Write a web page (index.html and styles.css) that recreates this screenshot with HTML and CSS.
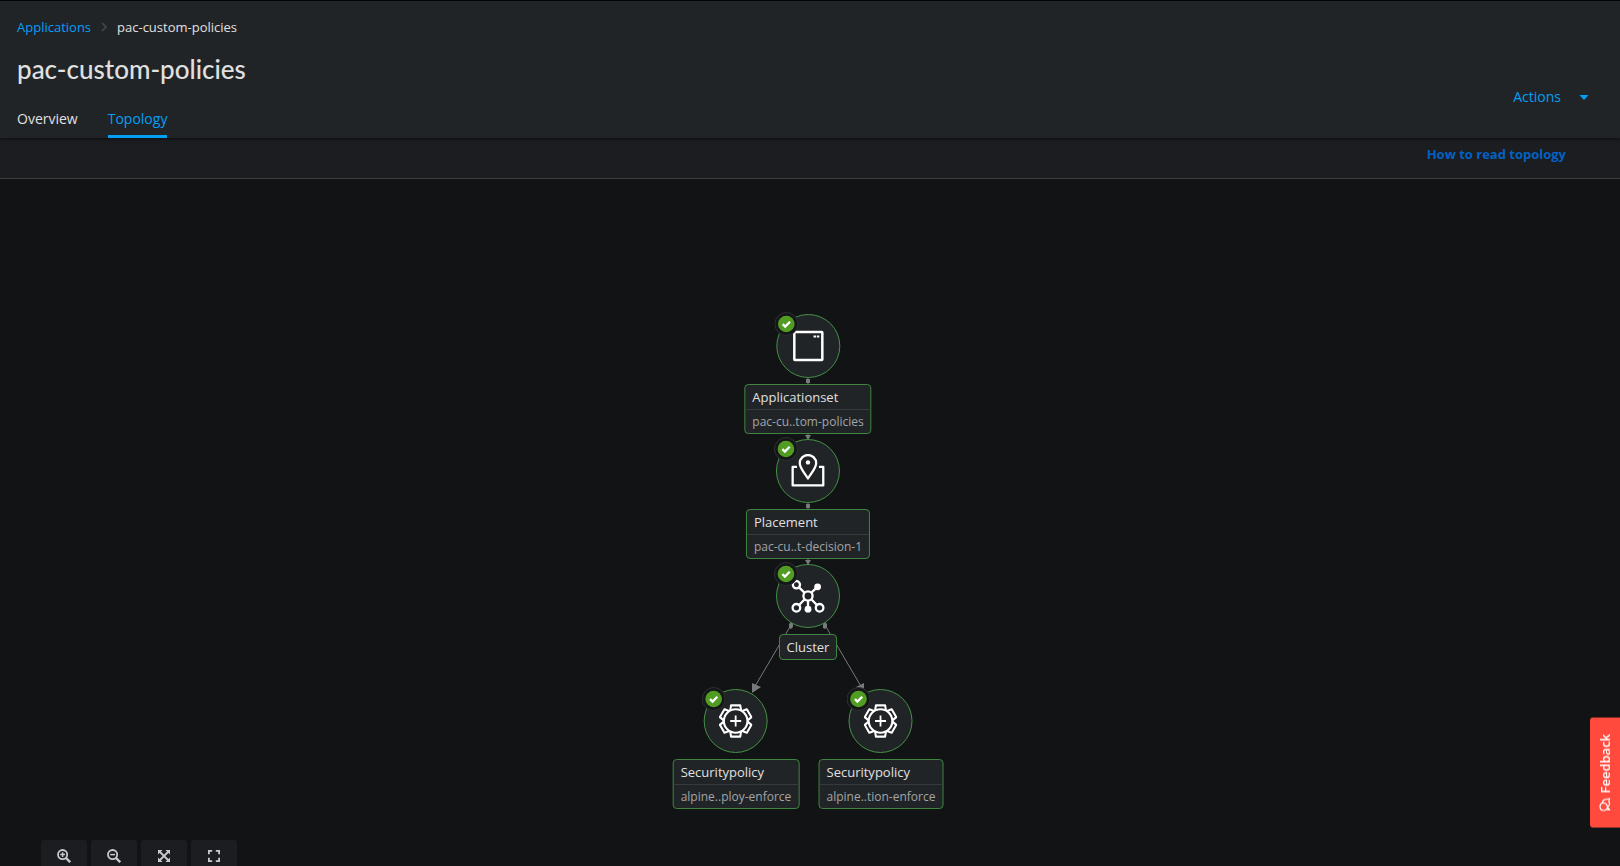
FILE: index.html
```html
<!DOCTYPE html>
<html lang="en">
<head>
<meta charset="utf-8">
<meta name="viewport" content="width=device-width, initial-scale=1">
<title>pac-custom-policies</title>
<link rel="stylesheet" href="styles.css">
</head>
<body>
<svg class="defs" aria-hidden="true">
  <symbol id="badge" viewBox="-12 -12 24 24">
    <circle r="11.5" fill="#151618" stroke="#2e3034"/>
    <circle r="8.3" fill="#519d23"/>
    <path d="M-3.6 .1-1.1 2.6 3.7-2.3" fill="none" stroke="#fff" stroke-width="2.3"/>
  </symbol>
  <symbol id="gear" viewBox="-17 -17 34 34">
    <g fill="none" stroke="#fff" stroke-width="2.1" stroke-linejoin="round">
      <circle r="11.8"/>
      <path id="tooth" d="M-5.4-10.6-4.6-15.6H4.6L5.4-10.6"/>
      <use href="#tooth" transform="rotate(60)"/>
      <use href="#tooth" transform="rotate(120)"/>
      <use href="#tooth" transform="rotate(180)"/>
      <use href="#tooth" transform="rotate(240)"/>
      <use href="#tooth" transform="rotate(300)"/>
      <path d="M0-5.5V5.5M-5.5 0H5.5" stroke-width="1.8"/>
    </g>
  </symbol>
</svg>

<header class="page-header">
  <div class="heading">
    <nav class="breadcrumb" aria-label="Breadcrumb">
      <a href="#">Applications</a>
      <svg width="6" height="10" viewBox="0 0 6 10" aria-hidden="true"><path d="M1 1l4 4-4 4" fill="none" stroke="#44474a" stroke-width="1.6"/></svg>
      <span>pac-custom-policies</span>
    </nav>
    <h1>pac-custom-policies</h1>
    <nav class="tabs" aria-label="Sections">
      <a href="#">Overview</a>
      <a href="#" class="active" aria-current="page">Topology</a>
    </nav>
  </div>
  <button class="actions" type="button">Actions
    <svg width="10" height="5" viewBox="0 0 10 5" aria-hidden="true"><path d="M.4 0H9.6L5 5z" fill="currentColor"/></svg>
  </button>
</header>

<div class="help-bar"><a href="#">How to read topology</a></div>

<main class="canvas">
  <div class="stage">
    <svg class="edges" viewBox="0 0 288 512" aria-hidden="true">
      <g stroke="#77797b" fill="none">
        <path d="M144 74V86M144 130V136M144 199V211M144 255V261"/>
        <path d="M127 321 90 384M161 321 198 384"/>
      </g>
      <g fill="#77797b">
        <path d="M142 75h4v4h-4zM142 200h4v4h-4zM141 131h6l-3 5zM141 256h6l-3 5z"/>
        <path d="M125 320l2-2 2 2v3l-2 2-2-1zM159 320l2-2 2 2v3l-2 2-2-1z"/>
        <path d="M88 379l9 4-9 6zM200 379l-8 4 8 6z"/>
      </g>
    </svg>

    <div class="node app">
      <div class="disc">
        <svg class="badge" aria-label="Healthy"><use href="#badge"/></svg>
        <svg width="34" height="34" viewBox="-17 -17 34 34" aria-hidden="true">
          <rect x="-14" y="-14" width="28" height="28" rx=".5" fill="none" stroke="#fff" stroke-width="2.5"/>
          <path d="M5.2-9.6H7.7M8.5-9.6H11" stroke="#fff" stroke-width="2"/>
        </svg>
      </div>
      <div class="label"><span class="kind">Applicationset</span><span class="name">pac-cu..tom-policies</span></div>
    </div>

    <div class="node placement">
      <div class="disc">
        <svg class="badge" aria-label="Healthy"><use href="#badge"/></svg>
        <svg width="34" height="34" viewBox="-17 -17 34 34" aria-hidden="true">
          <g fill="none" stroke="#fff" stroke-width="2.3" stroke-linejoin="round">
            <path d="M0 7.5C-3 2.2-8.2-2.8-8.2-7.8A8.2 8.2 0 0 1 8.2-7.8C8.2-2.8 3 2.2 0 7.5z"/>
            <path d="M-11-4.2H-15.3V14.4H15.3V-4.2H11"/>
          </g>
          <circle cy="-8.6" r="2.2" fill="#fff"/>
        </svg>
      </div>
      <div class="label"><span class="kind">Placement</span><span class="name">pac-cu..t-decision-1</span></div>
    </div>

    <div class="node cluster">
      <div class="disc">
        <svg class="badge" aria-label="Healthy"><use href="#badge"/></svg>
        <svg width="34" height="34" viewBox="-17 -17 34 34" aria-hidden="true">
          <g fill="none" stroke="#fff" stroke-width="2.3">
            <circle r="4.6"/><circle cx="-11.6" cy="-11.2" r="3.6"/>
            <circle cx="-11.6" cy="11.8" r="3.8"/><circle cx="11.6" cy="11.8" r="3.8"/>
            <path d="M-9-8.6-3.3-3.2M3.3-3.3 9-8.6M-3.3 3.3-8.9 9M3.3 3.3 8.9 9M0 4.6V12"/>
          </g>
          <g fill="#fff"><circle cx="9.6" cy="-9.2" r="3.4"/><circle cy="13.2" r="3.4"/></g>
        </svg>
      </div>
      <div class="label"><span class="kind">Cluster</span></div>
    </div>

    <div class="node policy-left">
      <div class="disc">
        <svg class="badge" aria-label="Healthy"><use href="#badge"/></svg>
        <svg width="34" height="34" aria-hidden="true"><use href="#gear"/></svg>
      </div>
      <div class="label"><span class="kind">Securitypolicy</span><span class="name">alpine..ploy-enforce</span></div>
    </div>

    <div class="node policy-right">
      <div class="disc">
        <svg class="badge" aria-label="Healthy"><use href="#badge"/></svg>
        <svg width="34" height="34" aria-hidden="true"><use href="#gear"/></svg>
      </div>
      <div class="label"><span class="kind">Securitypolicy</span><span class="name">alpine..tion-enforce</span></div>
    </div>
  </div>

  <div class="controls">
    <button type="button" aria-label="Zoom in"><svg viewBox="0 0 14 14"><g fill="none" stroke="currentColor"><circle cx="5.6" cy="5.6" r="4.6" stroke-width="1.8"/><path d="M9 9l4.2 4.2" stroke-width="2.4"/><path d="M5.6 3.2v4.8M3.2 5.6H8" stroke-width="1.5"/></g></svg></button>
    <button type="button" aria-label="Zoom out"><svg viewBox="0 0 14 14"><g fill="none" stroke="currentColor"><circle cx="5.6" cy="5.6" r="4.6" stroke-width="1.8"/><path d="M9 9l4.2 4.2" stroke-width="2.4"/><path d="M3.2 5.6H8" stroke-width="1.5"/></g></svg></button>
    <button type="button" aria-label="Fit to screen"><svg viewBox="0 0 14 14"><path d="M1 1h4.6L1 5.6zM13 1v4.6L8.4 1zM1 13V8.4L5.6 13zM13 13H8.4L13 8.4z" fill="currentColor"/><path d="M2.5 2.5l9 9M11.5 2.5l-9 9" stroke="currentColor" stroke-width="1.8"/></svg></button>
    <button type="button" aria-label="Reset view"><svg viewBox="0 0 14 14"><path d="M1.9 5.2V1.9H5.2M8.8 1.9h3.3v3.3M12.1 8.8v3.3H8.8M5.2 12.1H1.9V8.8" fill="none" stroke="currentColor" stroke-width="1.8"/></svg></button>
  </div>
</main>

<button class="feedback" type="button">
  <svg width="12" height="14" viewBox="0 0 12 14" aria-hidden="true"><g fill="none" stroke="#fff" stroke-width="1.2" stroke-linejoin="round"><path d="M8.4 9.4C8 11.6 6.4 13 4.6 13 2.6 13 1 11.4 1 9.2 1 7 2.6 5.4 4.6 5.4 6.6 5.4 8.4 7.2 8.4 9.4L10.6 12.4 7.4 12"/><path d="M3.4 5.4C3.6 3.2 5 1.8 7 2L10.6 1 9.8 3.8C11.2 5.8 10.6 8.4 8.4 9.2"/></g></svg>
  Feedback
</button>
</body>
</html>
```

FILE: styles.css
```css
* { box-sizing: border-box; }

body {
  margin: 0;
  height: 100vh;
  display: flex;
  flex-direction: column;
  overflow: hidden;
  background: #121314;
  color: #e0e0e0;
  font-family: "Open Sans", "Noto Sans", sans-serif;
  font-size: 13px;
}

a { color: #039ff5; text-decoration: none; }
button { border: 0; padding: 0; font: inherit; cursor: pointer; }
.defs { position: absolute; width: 0; height: 0; }

.page-header {
  display: flex;
  justify-content: space-between;
  align-items: flex-end;
  padding: 16px 31px 0 17px;
  border-top: 1px solid #030303;
  background: #212427;
  box-shadow: 0 1px 3px #0c0d0e;
  position: relative;
}

.breadcrumb { display: flex; align-items: center; gap: 10px; line-height: 20px; }

h1 {
  margin: 16px 0 20px;
  font-family: Lato, sans-serif;
  font-size: 26px;
  line-height: 32px;
  font-weight: 500;
}

.tabs { display: flex; gap: 30px; line-height: 20px; font-size: 14px; }
.tabs a { padding: 4px 0 6px; color: #e0e0e0; border-bottom: 3px solid transparent; }
.tabs .active { color: #039ff5; border-color: #039ff5; }

.actions {
  display: flex;
  align-items: center;
  gap: 18px;
  margin-bottom: 31px;
  line-height: 20px;
  font-size: 14px;
  background: none;
  color: #039ff5;
}

.help-bar {
  display: flex;
  justify-content: flex-end;
  padding: 6px 54px 14px;
  border-bottom: 1px solid #3c3f42;
  background: #1b1d21;
  line-height: 20px;
  font-size: 13px;
  font-weight: 700;
}
.help-bar a { color: #0062c4; }

.canvas {
  position: relative;
  flex: 1;
  display: flex;
  justify-content: center;
  align-items: flex-start;
  padding: 125px 4px 0 0;
}

.stage { position: relative; width: 288px; height: 512px; }
.edges { position: absolute; inset: 0; width: 288px; height: 512px; }

.node {
  position: absolute;
  transform: translateX(-50%);
  display: flex;
  flex-direction: column;
  align-items: center;
  gap: 6px;
}
.app { left: 144px; top: 10px; }
.placement { left: 144px; top: 135px; }
.cluster { left: 144px; top: 260px; }
.policy-left { left: 72px; top: 385px; }
.policy-right { left: 217px; top: 385px; }

.disc {
  position: relative;
  width: 64px;
  height: 64px;
  display: grid;
  place-items: center;
  border: 1px solid #449145;
  border-radius: 50%;
  background: #212427;
}
.badge { position: absolute; left: -3px; top: -3px; width: 24px; height: 24px; z-index: 1; }

.label {
  display: flex;
  flex-direction: column;
  border: 1px solid #3f8540;
  border-radius: 4px;
  background: #212427;
  white-space: nowrap;
}
.kind { padding: 0 7px; line-height: 24px; }
.name {
  padding: 0 7px;
  border-top: 1px solid #36393d;
  line-height: 23px;
  font-size: 12px;
  color: #a3a5a7;
}

.controls { position: absolute; left: 41px; bottom: -10px; display: flex; gap: 4px; }
.controls button {
  width: 46px;
  height: 36px;
  display: grid;
  place-items: center;
  border-radius: 3px;
  background: #1b1d21;
  color: #c9cacc;
}
.controls svg { width: 14px; height: 14px; margin-bottom: 4px; }

.feedback {
  position: fixed;
  right: 0;
  bottom: 38px;
  display: flex;
  align-items: center;
  justify-content: center;
  gap: 4px;
  padding: 16px 0;
  width: 30px;
  writing-mode: vertical-rl;
  transform: rotate(180deg);
  border-radius: 0 3px 3px 0;
  background: #ff4a3d;
  color: #fff;
  font-size: 13px;
  font-weight: 600;
  line-height: 30px;
}
.feedback svg { transform: rotate(180deg); }
```
